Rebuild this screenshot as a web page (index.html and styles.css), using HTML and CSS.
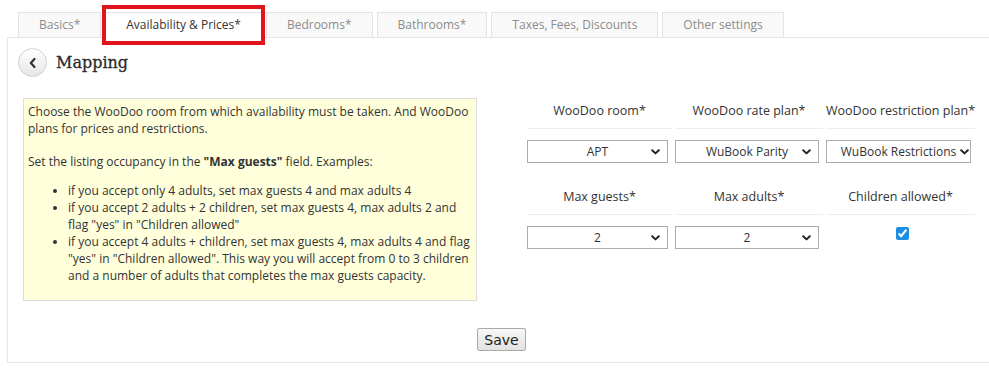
FILE: index.html
```html
<!DOCTYPE html>
<html lang="en">
  <head>
    <meta charset="UTF-8" />
    <meta name="viewport" content="width=device-width, initial-scale=1.0" />
    <title>Mapping</title>
    <link rel="stylesheet" href="styles.css">
  </head>
  <body>
    <div class="page">
      <ul class="tabs">
        <li class="tab">Basics*</li>
        <li class="tab active">Availability &amp; Prices*</li>
        <li class="tab">Bedrooms*</li>
        <li class="tab">Bathrooms*</li>
        <li class="tab">Taxes, Fees, Discounts</li>
        <li class="tab">Other settings</li>
      </ul>

      <div class="panel">
        <div class="heading">
          <button class="back" type="button">
            <svg width="10" height="12" viewBox="0 0 10 12">
              <polyline points="6.5,2 2.8,6 6.5,10" fill="none" stroke="#333" stroke-width="2.2" stroke-linecap="round" stroke-linejoin="round" />
            </svg>
          </button>
          <h2>Mapping</h2>
        </div>

        <div class="mapping">
          <div class="info">
            <p>Choose the WooDoo room from which availability must be taken. And WooDoo plans for prices and restrictions.</p>
            <p>Set the listing occupancy in the <b>"Max guests"</b> field. Examples:</p>
            <ul>
              <li>if you accept only 4 adults, set max guests 4 and max adults 4</li>
              <li>if you accept 2 adults + 2 children, set max guests 4, max adults 2 and flag "yes" in "Children allowed"</li>
              <li>if you accept 4 adults + children, set max guests 4, max adults 4 and flag "yes" in "Children allowed". This way you will accept from 0 to 3 children and a number of adults that completes the max guests capacity.</li>
            </ul>
          </div>

          <div class="fields">
            <div class="field-head">WooDoo room*</div>
            <div class="field-head">WooDoo rate plan*</div>
            <div class="field-head">WooDoo restriction plan*</div>

            <div class="field-input">
              <div class="select">
                <select><option>APT</option></select>
                <svg class="caret" width="9" height="6" viewBox="0 0 9 6"><polyline points="1.2,1.2 4.5,4.4 7.8,1.2" /></svg>
              </div>
            </div>
            <div class="field-input">
              <div class="select">
                <select><option>WuBook Parity</option></select>
                <svg class="caret" width="9" height="6" viewBox="0 0 9 6"><polyline points="1.2,1.2 4.5,4.4 7.8,1.2" /></svg>
              </div>
            </div>
            <div class="field-input">
              <div class="select wide">
                <select><option>WuBook Restrictions</option></select>
                <svg class="caret" width="9" height="6" viewBox="0 0 9 6"><polyline points="1.2,1.2 4.5,4.4 7.8,1.2" /></svg>
              </div>
            </div>

            <div class="field-head">Max guests*</div>
            <div class="field-head">Max adults*</div>
            <div class="field-head">Children allowed*</div>

            <div class="field-input">
              <div class="select">
                <select><option>2</option></select>
                <svg class="caret" width="9" height="6" viewBox="0 0 9 6"><polyline points="1.2,1.2 4.5,4.4 7.8,1.2" /></svg>
              </div>
            </div>
            <div class="field-input">
              <div class="select">
                <select><option>2</option></select>
                <svg class="caret" width="9" height="6" viewBox="0 0 9 6"><polyline points="1.2,1.2 4.5,4.4 7.8,1.2" /></svg>
              </div>
            </div>
            <div class="field-input check-cell">
              <input type="checkbox" class="check" checked />
            </div>
          </div>
        </div>

        <div class="actions">
          <button class="save" type="button">Save</button>
        </div>
      </div>
    </div>
  </body>
</html>
```

FILE: styles.css
```css
html,
body {
  margin: 0;
  overflow: hidden;
  background: #fff;
}
body {
  font-family: "Open Sans", "Liberation Sans", sans-serif;
  color: #333;
}
.page {
  padding-left: 7px;
}
.tabs {
  display: flex;
  gap: 4px;
  list-style: none;
  margin: 12px 0 0 11px;
  padding: 0;
}
.tab {
  position: relative;
  height: 25px;
  line-height: 24px;
  padding: 0 20px;
  font-size: 12px;
  color: #8c8c8c;
  background-color: #f9f9f9;
  border: 1px solid #e3e3e3;
  border-bottom: none;
  box-sizing: border-box;
}
.tab.active {
  height: 26px;
  margin-bottom: -1px;
  z-index: 1;
  color: #333;
  background-color: #fff;
}
/* red highlight drawn around the active tab */
.tab.active::after {
  content: "";
  position: absolute;
  left: -4px;
  right: -4px;
  top: -8px;
  bottom: -7px;
  border: 4px solid #e2131c;
}
.panel {
  box-sizing: border-box;
  width: 988px;
  padding: 10px 15px 11px;
  border: 1px solid #e5e5e5;
  border-right: none;
  box-shadow: 0 2px 2px rgba(0, 0, 0, 0.04);
}
.heading {
  display: flex;
  align-items: center;
  gap: 9px;
  margin-left: -5px;
}
.back {
  display: flex;
  align-items: center;
  justify-content: center;
  width: 29px;
  height: 29px;
  padding: 0;
  border: 1px solid #cfcfcf;
  border-radius: 50%;
  background: linear-gradient(#ffffff, #e6e6e6);
}
.heading h2 {
  margin: 0;
  font-family: "DejaVu Serif", "Liberation Serif", serif;
  font-size: 16px;
  font-weight: normal;
  color: #2b2b2b;
  -webkit-text-stroke: 0.3px #2b2b2b;
}
.mapping {
  display: flex;
  align-items: flex-start;
  gap: 50px;
  margin-top: 17px;
}
.info {
  box-sizing: border-box;
  width: 454px;
  margin-top: 4px;
  padding: 4px 4px;
  font-size: 12px;
  line-height: 17px;
  background-color: #ffffdc;
  border: 1px solid #dedede;
}
.info p {
  margin: 0 0 16px;
}
.info p + p {
  margin: 0;
}
.info ul {
  margin: 12px 0;
  padding-left: 40px;
}
.fields {
  display: grid;
  grid-template-columns: 145px 148px 149px;
  column-gap: 3px;
}
.field-head {
  height: 34px;
  line-height: 34px;
  text-align: center;
  font-size: 12.5px;
  white-space: nowrap;
  border-bottom: 1px solid #eeeeee;
}
.field-input {
  padding: 11px 0 17px;
}
.select {
  position: relative;
  width: calc(100% - 4px);
}
select {
  display: block;
  width: 100%;
  height: 23px;
  padding: 0 14px;
  font-family: "Open Sans", "Liberation Sans", sans-serif;
  font-size: 12px;
  color: #333;
  text-align: center;
  text-align-last: center;
  background-color: #fff;
  border: 1px solid #acacac;
  border-radius: 0;
  appearance: none;
  -webkit-appearance: none;
}
.select.wide select {
  padding: 0 8px;
}
.caret {
  position: absolute;
  right: 8px;
  top: 9px;
  pointer-events: none;
}
.select.wide .caret {
  right: 2px;
}
.caret polyline {
  fill: none;
  stroke: #222;
  stroke-width: 2;
  stroke-linecap: round;
  stroke-linejoin: round;
}
.check-cell {
  padding-left: 3px;
}
.check {
  display: block;
  width: 13px;
  height: 13px;
  margin: 1px auto 0;
  accent-color: #1c8fe4;
}
.actions {
  display: flex;
  justify-content: center;
  margin-top: 27px;
}
.save {
  height: 23px;
  padding: 0 6px;
  font-family: "DejaVu Sans", sans-serif;
  font-size: 14px;
  color: #222;
  background: linear-gradient(#f7f7f7, #e2e2e2);
  border: 1px solid #a9a9a9;
  border-radius: 2px;
}
```
